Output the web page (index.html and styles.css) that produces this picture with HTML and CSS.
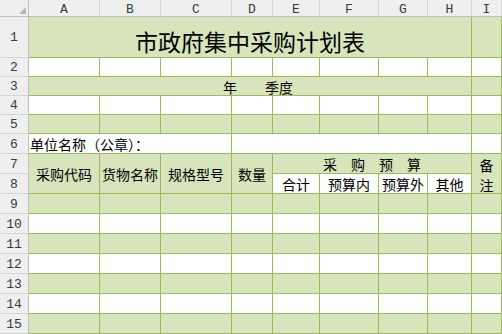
FILE: index.html
```html
<!DOCTYPE html>
<html lang="zh-CN">
<head>
<meta charset="utf-8">
<title>市政府集中采购计划表</title>
<link rel="stylesheet" href="styles.css">
</head>
<body>
<div class="sheet">
  <div class="corner"><span class="tri"></span></div>
  <div class="ch">A</div><div class="ch">B</div><div class="ch">C</div><div class="ch">D</div><div class="ch">E</div><div class="ch">F</div><div class="ch">G</div><div class="ch">H</div><div class="ch">I</div>

  <div class="rh">1</div>
  <div class="c g span8 title">市政府集中采购计划表</div>
  <div class="c g"></div>

  <div class="rh">2</div>
  <div class="c w"></div><div class="c w"></div><div class="c w"></div><div class="c w"></div><div class="c w"></div><div class="c w"></div><div class="c w"></div><div class="c w"></div><div class="c w"></div>

  <div class="rh">3</div>
  <div class="c g span8 season">年　　季度</div>
  <div class="c g"></div>

  <div class="rh">4</div>
  <div class="c w"></div><div class="c w"></div><div class="c w"></div><div class="c w"></div><div class="c w"></div><div class="c w"></div><div class="c w"></div><div class="c w"></div><div class="c w"></div>

  <div class="rh">5</div>
  <div class="c g"></div><div class="c g"></div><div class="c g"></div><div class="c g"></div><div class="c g"></div><div class="c g"></div><div class="c g"></div><div class="c g"></div><div class="c g"></div>

  <div class="rh">6</div>
  <div class="c w span3 unit">单位名称（公章）：</div>
  <div class="c w span5"></div>
  <div class="c w"></div>

  <div class="rh">7</div>
  <div class="c g tall lbl">采购代码</div>
  <div class="c g tall lbl">货物名称</div>
  <div class="c g tall lbl">规格型号</div>
  <div class="c g tall lbl">数量</div>
  <div class="c g span4 lbl">采　购　预　算</div>
  <div class="c g tall lbl note">备<br>注</div>

  <div class="rh">8</div>
  <div class="c w lbl">合计</div>
  <div class="c w lbl">预算内</div>
  <div class="c w lbl">预算外</div>
  <div class="c w lbl">其他</div>

  <div class="rh">9</div>
  <div class="c g"></div><div class="c g"></div><div class="c g"></div><div class="c g"></div><div class="c g"></div><div class="c g"></div><div class="c g"></div><div class="c g"></div><div class="c g"></div>

  <div class="rh">10</div>
  <div class="c w"></div><div class="c w"></div><div class="c w"></div><div class="c w"></div><div class="c w"></div><div class="c w"></div><div class="c w"></div><div class="c w"></div><div class="c w"></div>

  <div class="rh">11</div>
  <div class="c g"></div><div class="c g"></div><div class="c g"></div><div class="c g"></div><div class="c g"></div><div class="c g"></div><div class="c g"></div><div class="c g"></div><div class="c g"></div>

  <div class="rh">12</div>
  <div class="c w"></div><div class="c w"></div><div class="c w"></div><div class="c w"></div><div class="c w"></div><div class="c w"></div><div class="c w"></div><div class="c w"></div><div class="c w"></div>

  <div class="rh">13</div>
  <div class="c g"></div><div class="c g"></div><div class="c g"></div><div class="c g"></div><div class="c g"></div><div class="c g"></div><div class="c g"></div><div class="c g"></div><div class="c g"></div>

  <div class="rh">14</div>
  <div class="c w"></div><div class="c w"></div><div class="c w"></div><div class="c w"></div><div class="c w"></div><div class="c w"></div><div class="c w"></div><div class="c w"></div><div class="c w"></div>

  <div class="rh">15</div>
  <div class="c g"></div><div class="c g"></div><div class="c g"></div><div class="c g"></div><div class="c g"></div><div class="c g"></div><div class="c g"></div><div class="c g"></div><div class="c g"></div>
</div>
</body>
</html>
```

FILE: styles.css
```css
html, body {
  margin: 0;
  padding: 0;
  background: #ffffff;
}

.sheet {
  display: grid;
  grid-template-columns: 29px 71px 61px 71px 41px 47px 59px 49px 44px 30px;
  grid-template-rows: 17px 41px repeat(4, 19px) repeat(10, 20px);
  width: 502px;
  height: 334px;
  overflow: hidden;
  font-family: "Noto Sans CJK SC", "Noto Sans", sans-serif;
  font-size: 14px;
  color: #000;
}

.sheet > div {
  box-sizing: border-box;
  min-width: 0;
}

.corner {
  background: #efefef;
  border-right: 1px solid #bfbfbf;
  border-bottom: 1px solid #bfbfbf;
  display: flex;
  justify-content: flex-end;
  align-items: flex-end;
  padding: 0 2px 2px 0;
}

.tri {
  width: 0;
  height: 0;
  border-left: 7px solid transparent;
  border-bottom: 7px solid #b5b5b5;
}

.ch {
  background: #efefef;
  border-right: 1px solid #d5d5d5;
  border-bottom: 1px solid #bfbfbf;
  display: flex;
  justify-content: center;
  align-items: center;
  font-family: "Liberation Mono", "DejaVu Sans Mono", monospace;
  font-size: 13px;
  color: #3a3a3a;
  padding-top: 2px;
}

.ch:last-of-type {
  border-right: none;
}

.rh {
  background: #efefef;
  border-right: 1px solid #bfbfbf;
  border-bottom: 1px solid #d5d5d5;
  display: flex;
  justify-content: center;
  align-items: center;
  font-family: "Liberation Mono", "DejaVu Sans Mono", monospace;
  font-size: 13px;
  color: #3a3a3a;
  padding-top: 1px;
}

.c {
  border-right: 1px solid #9bbb59;
  border-bottom: 1px solid #9bbb59;
}

.g {
  background: #d8e4bc;
}

.w {
  background: #ffffff;
}

.span8 { grid-column: span 8; }
.span5 { grid-column: span 5; }
.span4 { grid-column: span 4; }
.span3 { grid-column: span 3; }
.tall { grid-row: span 2; }

.title {
  display: flex;
  justify-content: center;
  align-items: flex-end;
  font-size: 23px;
  line-height: 1;
  padding-bottom: 4px;
}

.season {
  display: flex;
  justify-content: center;
  align-items: center;
  line-height: 1;
  padding-left: 16px;
  padding-top: 1px;
}

.unit {
  display: flex;
  align-items: center;
  line-height: 1;
  padding-left: 1px;
  padding-top: 1px;
  white-space: nowrap;
}

.lbl {
  display: flex;
  justify-content: center;
  align-items: center;
  text-align: center;
  line-height: 1;
  white-space: nowrap;
  padding-top: 1px;
}

.note {
  line-height: 20px;
  white-space: normal;
  padding-top: 2px;
}
```
